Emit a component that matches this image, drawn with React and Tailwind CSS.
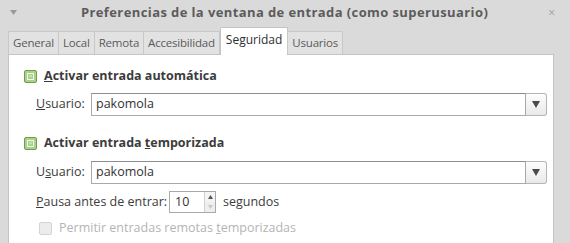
import React from "react";

function Check({ disabled }) {
  if (disabled) {
    return <span className="w-[13px] h-[13px] border border-[#d4d4d4] bg-[#ececec] rounded-[2px] inline-block shrink-0" />;
  }
  return (
    <span className="w-[13px] h-[13px] border border-[#6e9e4e] bg-[#a9d18a] rounded-[2px] inline-flex items-center justify-center shrink-0">
      <span className="w-[7px] h-[7px] border border-[#f2f8ec] flex items-center justify-center text-[6px] leading-none text-[#eef6e6]">×</span>
    </span>
  );
}

function Combo({ value }) {
  return (
    <div className="flex h-[23px] flex-1">
      <div className="flex-1 border border-[#a9a9a9] border-t-[#8f8f8f] bg-white flex items-center pl-[4px] text-[12.5px] text-[#333]">
        {value}
      </div>
      <div className="w-[21px] border border-l-0 border-[#b5b5b5] rounded-r-[3px] bg-gradient-to-b from-[#fdfdfd] to-[#e9e9e9] flex items-center justify-center">
        <svg width="8" height="7" viewBox="0 0 8 7"><path d="M0 0h8L4 7z" fill="#4a4a4a" /></svg>
      </div>
    </div>
  );
}

const tabs = ["General", "Local", "Remota", "Accesibilidad", "Seguridad", "Usuarios"];

export default function App() {
  return (
    <div className="w-[570px] h-[243px] bg-[#dadada] overflow-hidden text-[#3c3c3c]" style={{ fontFamily: '"Open Sans", "DejaVu Sans", sans-serif' }}>
      {/* title bar */}
      <div className="h-[26px] flex items-center px-[10px] relative">
        <svg width="7" height="5" viewBox="0 0 7 5" className="mt-[-2px]"><path d="M0 0h7L3.5 5z" fill="#9a9a9a" /></svg>
        <div className="flex-1 text-center font-bold text-[13px] text-[#5c5c5c] tracking-[0.4px] pl-[4px]">
          Preferencias de la ventana de entrada (como superusuario)
        </div>
        <span className="text-[#a0a0a0] text-[12px] mr-[5px]">×</span>
      </div>
      {/* tabs */}
      <div className="flex items-end pl-[8px] h-[28px] relative z-10">
        {tabs.map((t) =>
          t === "Seguridad" ? (
            <div key={t} className="h-[28px] px-[5px] bg-white border border-b-0 border-[#c4c4c4] text-[12px] text-[#2e2e2e] flex items-center rounded-t-[2px] mb-[-1px] pb-[3px]">
              {t}
            </div>
          ) : (
            <div key={t} className="h-[23px] px-[4px] bg-[#e2e2e2] border border-b-0 border-[#c8c8c8] -ml-px first:ml-0 text-[11.5px] tracking-[-0.2px] text-[#5a5a5a] flex items-center">
              {t}
            </div>
          )
        )}
      </div>
      {/* panel */}
      <div className="ml-[8px] w-[546px] h-[190px] bg-white border border-[#c4c4c4] pl-[15px] pr-[6px] pt-[14px]">
        <div className="flex items-center gap-[7px] h-[14px]">
          <Check />
          <span className="font-bold text-[12.5px]"><u>A</u>ctivar entrada automática</span>
        </div>
        <div className="flex items-center mt-[10px] pl-[12px]">
          <span className="w-[55px] text-[12.5px]"><u>U</u>suario:</span>
          <Combo value="pakomola" />
        </div>
        <div className="flex items-center gap-[7px] h-[14px] mt-[20px]">
          <Check />
          <span className="font-bold text-[12.5px]">Activar entrada <u>t</u>emporizada</span>
        </div>
        <div className="flex items-center mt-[11px] pl-[12px]">
          <span className="w-[55px] text-[12.5px]">U<u>s</u>uario:</span>
          <Combo value="pakomola" />
        </div>
        <div className="flex items-center mt-[7px] pl-[12px]">
          <span className="w-[133px] text-[12.5px] whitespace-nowrap"><u>P</u>ausa antes de entrar:</span>
          <div className="flex h-[22px] w-[47px] border border-[#a9a9a9] bg-white">
            <div className="flex-1 flex items-center pl-[5px] text-[12.5px] text-[#333]">10</div>
            <div className="w-[11px] border-l border-[#d0d0d0] flex flex-col">
              <div className="flex-1 flex items-center justify-center bg-[#f4f4f4]">
                <svg width="5" height="4" viewBox="0 0 5 4"><path d="M0 4h5L2.5 0z" fill="#555" /></svg>
              </div>
              <div className="flex-1 flex items-center justify-center bg-[#eeeeee]">
                <svg width="5" height="4" viewBox="0 0 5 4"><path d="M0 0h5L2.5 4z" fill="#c8c8c8" /></svg>
              </div>
            </div>
          </div>
          <span className="ml-[7px] text-[12.5px]">segundos</span>
        </div>
        <div className="flex items-center gap-[7px] mt-[6px] pl-[15px]">
          <Check disabled />
          <span className="text-[12.5px] text-[#b4b4b4] whitespace-nowrap">Permitir entradas remotas <u>t</u>emporizadas</span>
        </div>
      </div>
    </div>
  );
}
